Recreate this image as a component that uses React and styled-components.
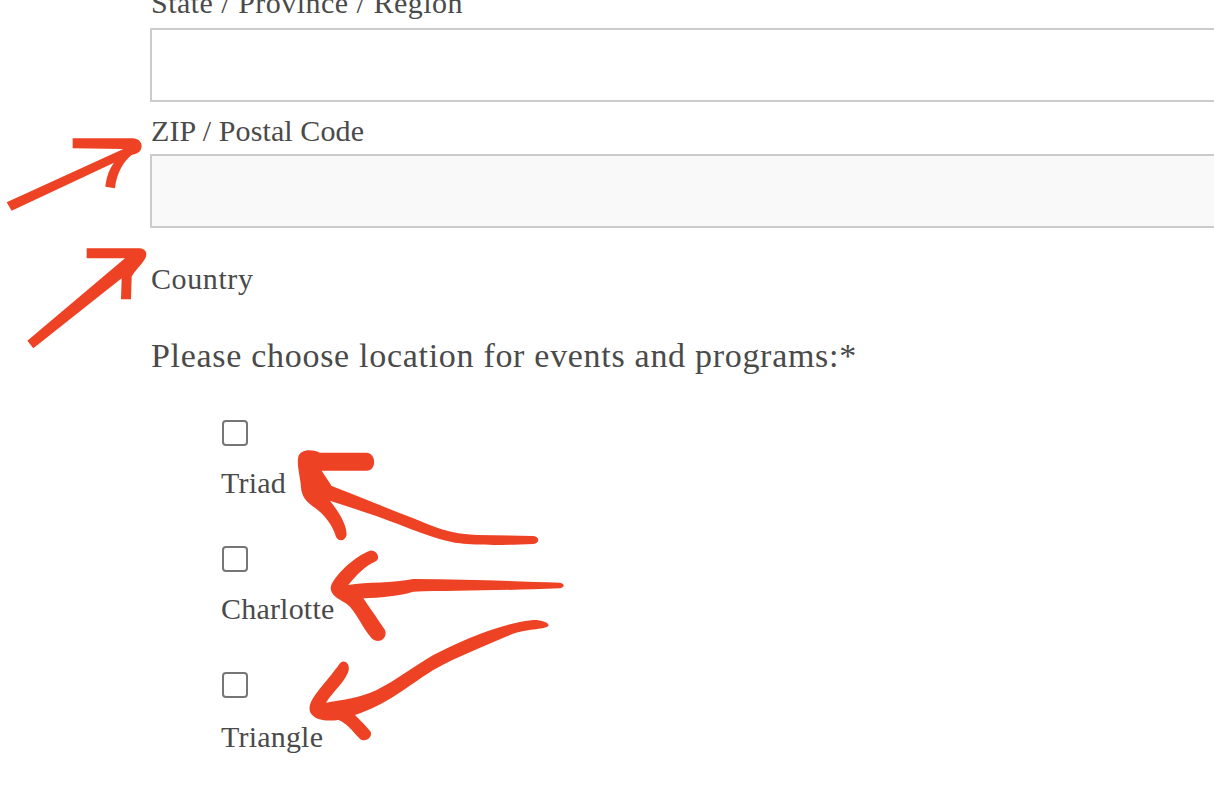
import React from 'react'
import styled, { createGlobalStyle } from 'styled-components'

const locations = ['Triad', 'Charlotte', 'Triangle']

function App() {
  return (
    <Page>
      <GlobalStyle />
      <Form>
        <StateLabel>State / Province / Region</StateLabel>
        <TextBox />
        <ZipLabel>ZIP / Postal Code</ZipLabel>
        <TextBox filled />
        <CountryLabel>Country</CountryLabel>
        <Question>Please choose location for events and programs:*</Question>
        <Choices>
          {locations.map((name) => (
            <Choice key={name}>
              <Box />
              <ChoiceName>{name}</ChoiceName>
            </Choice>
          ))}
        </Choices>
      </Form>
      <Arrows viewBox="0 0 1214 788">
        <g transform="scale(0.3333)">
          <path d="M218 415 L400 415 C420 417 428 432 424 445 C420 458 410 462 395 465 C375 480 350 515 345 565 L316 560 C320 525 330 505 342 488 L35 632 L20 607 L370 447 L218 445 Z" />
          <path d="M260 745 L420 745 C435 746 442 758 438 770 C430 790 405 810 395 830 L393 898 L363 898 L365 835 L100 1045 L82 1022 L375 775 L260 775 Z" />
        </g>
        <g transform="translate(200 400) scale(0.3333)">
          <path d="M295 170 C300 150 330 145 360 158 L500 158 C530 160 530 212 500 212 L365 212 L395 258 C480 290 560 325 640 355 C700 380 750 403 830 405 L1000 408 C1020 410 1020 430 1000 432 C900 436 830 436 780 430 C700 420 600 370 490 335 L390 302 C420 340 440 375 440 405 C435 425 415 425 408 410 C395 370 370 340 340 320 C310 300 303 280 302 250 C298 220 290 190 295 170 Z" />
          <path d="M510 452 C530 450 545 475 525 485 C495 497 470 525 445 555 C500 545 580 550 640 537 C800 537 950 545 1080 548 C1095 552 1095 562 1080 565 C900 572 750 572 640 575 C590 590 540 592 490 595 C510 625 535 660 555 690 C565 715 535 735 515 715 C490 685 475 650 450 620 C430 600 395 595 392 565 C395 530 470 465 510 452 Z" />
          <path d="M1000 660 C1030 660 1050 670 1045 678 C1030 690 980 685 930 705 C850 740 770 770 700 810 C620 860 560 915 465 945 C480 960 500 980 512 995 C520 1015 490 1030 478 1015 C460 995 435 965 415 960 C380 965 340 960 330 935 C320 900 370 860 420 790 C435 775 455 795 443 820 C430 850 400 875 378 908 C420 900 480 895 530 870 C590 840 640 800 700 765 C780 725 900 670 1000 660 Z" />
        </g>
      </Arrows>
    </Page>
  )
}

const GlobalStyle = createGlobalStyle`
html, body {
  margin: 0;
  padding: 0;
  background: #fff;
  overflow: hidden;
}
`

const Page = styled.div`
position: relative;
width: 1214px;
height: 788px;
overflow: hidden;
font-family: "Liberation Serif", "Noto Sans CJK SC", serif;
color: #4a4a4a;
`

const Form = styled.div`
display: flex;
flex-direction: column;
width: 1300px;
margin-top: -13px;
padding-left: 150px;
box-sizing: border-box;
`

const Label = styled.div`
font-size: 30px;
line-height: 32px;
padding-left: 1px;
letter-spacing: 0.1px;
`

const StateLabel = styled(Label)`
margin-bottom: 9px;
letter-spacing: 0.48px;
`

const ZipLabel = styled(Label)`
margin-top: 13px;
margin-bottom: 7px;
`

const CountryLabel = styled(Label)`
margin-top: 35px;
letter-spacing: 0.6px;
`

const TextBox = styled.div`
height: 74px;
box-sizing: border-box;
border: 2px solid #ccc;
background: ${(p) => (p.filled ? '#f9f9f9' : '#fff')};
`

const Question = styled.div`
font-size: 34px;
line-height: 38px;
padding-left: 1px;
margin-top: 42px;
letter-spacing: 0.7px;
`

const Choices = styled.div`
display: flex;
flex-direction: column;
gap: 47px;
margin-top: 45px;
padding-left: 72px;
`

const Box = styled.div`
width: 26px;
height: 26px;
box-sizing: border-box;
border: 2px solid #767676;
border-radius: 4px;
background: #fff;
`

const ChoiceName = styled.div`
font-size: 30px;
line-height: 32px;
margin-left: -1px;
letter-spacing: 0.2px;
`

const Choice = styled.div`
display: flex;
flex-direction: column;
align-items: flex-start;
gap: 21px;
&:last-child ${ChoiceName} {
  margin-top: 2px;
}
`

const Arrows = styled.svg`
position: absolute;
left: 0;
top: 0;
width: 1214px;
height: 788px;
fill: #ee4225;
pointer-events: none;
`

export default App
